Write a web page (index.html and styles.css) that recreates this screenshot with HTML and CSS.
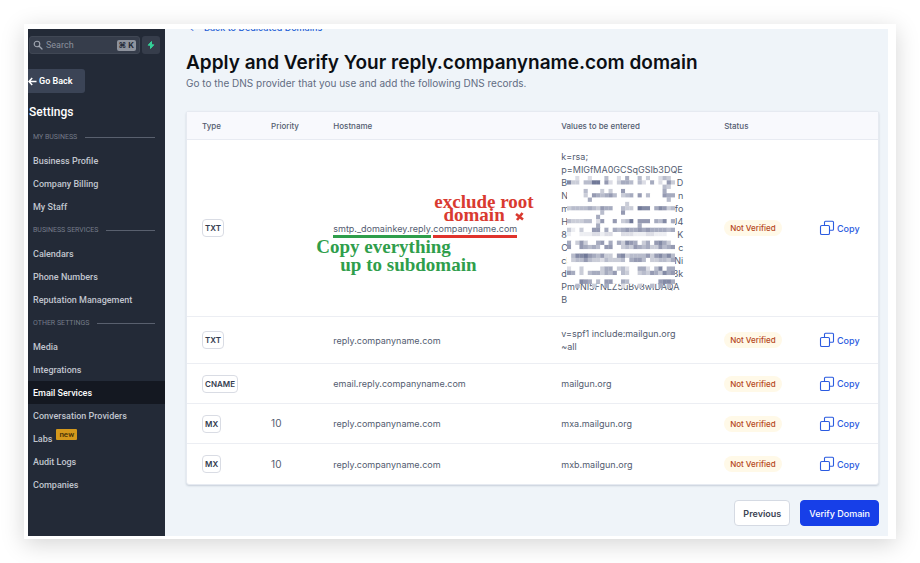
FILE: index.html
```html
<!DOCTYPE html>
<html lang="en">
<head>
  <meta charset="UTF-8" />
  <meta name="viewport" content="width=device-width, initial-scale=1.0"/>
  <title>Apply and Verify Your Domain</title>
  <link rel="stylesheet" href="styles.css">
</head>
<body>
  <svg width="0" height="0" class="sprite">
    <symbol id="copy" viewBox="0 0 16 16">
      <rect x="1.5" y="5.5" width="9" height="9" rx="1.3" fill="none" stroke="currentColor" stroke-width="1.1"/>
      <path d="M5.500 5.500V2.300q0-1 1-1H13.500q1 0 1 1V9.300q0 1-1 1H10.500" fill="none" stroke="currentColor" stroke-width="1.1"/>
    </symbol>
  </svg>

  <div class="frame">
    <aside class="sidebar">
      <div class="search-row">
        <div class="search">
          <svg width="10" height="10" viewBox="0 0 10 10"><circle cx="4" cy="4" r="2.800" fill="none" stroke="#a0a6b1" stroke-width="1.100"/><path d="M6.200 6.200L9 9" stroke="#a0a6b1" stroke-width="1.300" stroke-linecap="round"/></svg>
          <input type="text" placeholder="Search" aria-label="Search">
          <kbd>⌘ K</kbd>
        </div>
        <button class="bolt" aria-label="Quick actions">
          <svg width="8" height="10" viewBox="0 0 8 10"><path d="M4.500 1.500L1.200 5.200h2.300V8.500L6.800 4.800H4.500z" fill="#34d399" stroke="#34d399" stroke-linejoin="round"/></svg>
        </button>
      </div>
      <button class="go-back">
        <svg width="9" height="9" viewBox="0 0 9 9"><path d="M4.200 1L1 4.500L4.200 8M1 4.500H8.500" fill="none" stroke="#fff" stroke-width="1.500"/></svg>
        Go Back
      </button>
      <h2>Settings</h2>
      <nav>
        <h3>MY BUSINESS</h3>
        <a href="#">Business Profile</a>
        <a href="#">Company Billing</a>
        <a href="#">My Staff</a>
        <h3>BUSINESS SERVICES</h3>
        <a href="#">Calendars</a>
        <a href="#">Phone Numbers</a>
        <a href="#">Reputation Management</a>
        <h3>OTHER SETTINGS</h3>
        <a href="#">Media</a>
        <a href="#">Integrations</a>
        <a href="#" class="active">Email Services</a>
        <a href="#">Conversation Providers</a>
        <a href="#">Labs <span class="new">new</span></a>
        <a href="#">Audit Logs</a>
        <a href="#">Companies</a>
      </nav>
    </aside>

    <main>
      <a href="#" class="back-link"><span>←</span> Back to Dedicated Domains</a>
      <h1>Apply and Verify Your reply.companyname.com domain</h1>
      <p class="sub">Go to the DNS provider that you use and add the following DNS records.</p>

      <table>
        <colgroup>
          <col class="c-type"><col class="c-priority"><col class="c-host"><col class="c-value"><col class="c-status"><col>
        </colgroup>
        <thead>
          <tr><th>Type</th><th>Priority</th><th>Hostname</th><th>Values to be entered</th><th>Status</th><th></th></tr>
        </thead>
        <tbody>
          <tr>
            <td><span class="type">TXT</span></td>
            <td></td>
            <td>
              <div class="host">
                <span class="keep">smtp._domainkey.reply</span>.<span class="drop">companyname.com</span>
                <div class="note note-red">exclude root<br>domain
                  <svg width="9" height="9" viewBox="0 0 9 9"><path d="M1 2L8 7.500M7.500 1L2 8" stroke="#d93a30" stroke-width="2.600"/></svg>
                </div>
                <div class="note note-green">Copy everything<br><span>up to subdomain</span></div>
              </div>
            </td>
            <td>
              <div class="key">
                <div>k=rsa;</div>
                <div>p=MIGfMA0GCSqGSIb3DQE</div>
                <div class="split"><span>B</span><span>D</span></div>
                <div class="split"><span>N</span><span>n</span></div>
                <div class="split"><span>m</span><span>fo</span></div>
                <div class="split"><span>H</span><span>J4</span></div>
                <div class="split"><span>8</span><span>K</span></div>
                <div class="split"><span>C</span><span>c</span></div>
                <div class="split"><span>cl</span><span>Ni</span></div>
                <div class="split"><span>d</span><span>3k</span></div>
                <div>PmvNI5FNLZ5uBv8wIDAQA</div>
                <div>B</div>
                <svg id="mosaic" viewBox="0 0 26 26" preserveAspectRatio="none"></svg>
              </div>
            </td>
            <td><span class="status">Not Verified</span></td>
            <td><button class="copy"><svg><use href="#copy"/></svg>Copy</button></td>
          </tr>
          <tr>
            <td><span class="type">TXT</span></td>
            <td></td>
            <td>reply.companyname.com</td>
            <td>v=spf1 include:mailgun.org<br>~all</td>
            <td><span class="status">Not Verified</span></td>
            <td><button class="copy"><svg><use href="#copy"/></svg>Copy</button></td>
          </tr>
          <tr>
            <td><span class="type">CNAME</span></td>
            <td></td>
            <td>email.reply.companyname.com</td>
            <td>mailgun.org</td>
            <td><span class="status">Not Verified</span></td>
            <td><button class="copy"><svg><use href="#copy"/></svg>Copy</button></td>
          </tr>
          <tr>
            <td><span class="type">MX</span></td>
            <td class="num">10</td>
            <td>reply.companyname.com</td>
            <td>mxa.mailgun.org</td>
            <td><span class="status">Not Verified</span></td>
            <td><button class="copy"><svg><use href="#copy"/></svg>Copy</button></td>
          </tr>
          <tr>
            <td><span class="type">MX</span></td>
            <td class="num">10</td>
            <td>reply.companyname.com</td>
            <td>mxb.mailgun.org</td>
            <td><span class="status">Not Verified</span></td>
            <td><button class="copy"><svg><use href="#copy"/></svg>Copy</button></td>
          </tr>
        </tbody>
      </table>

      <div class="actions">
        <button class="btn">Previous</button>
        <button class="btn primary">Verify Domain</button>
      </div>
    </main>
  </div>
  <script src="script.js"></script>
</body>
</html>
```
FILE: styles.css
```css
* {
  box-sizing: border-box;
}
body {
  margin: 0;
  padding: 24px;
  background: #fff;
  font-family: Inter, sans-serif;
  font-size: 9px;
  color: #535c70;
}
button {
  font-family: inherit;
  cursor: pointer;
}
a {
  text-decoration: none;
}
.sprite {
  position: absolute;
}
.frame {
  display: flex;
  min-height: calc(100vh - 48px);
  padding: 5px 8px 3px 4px;
  background: #fff;
  box-shadow: 0 5px 22px rgba(0, 0, 0, 0.17);
}

/* sidebar */
.sidebar {
  width: 137px;
  flex-shrink: 0;
  background: #232a37;
  font-family: Roboto, sans-serif;
}
.search-row {
  display: flex;
  gap: 2px;
  margin-top: 7px;
  padding: 0 5px 0 1px;
}
.search {
  display: flex;
  align-items: center;
  flex: 1;
  gap: 3px;
  height: 18px;
  padding: 0 3px;
  background: #363d4b;
  border: 1px solid #404754;
  border-radius: 3px;
}
.search svg {
  flex-shrink: 0;
}
.search input {
  flex: 1;
  width: 20px;
  padding: 0;
  border: 0;
  background: none;
  font: 9px Roboto, sans-serif;
  color: #fff;
}
.search input::placeholder {
  color: #8b919d;
}
kbd {
  padding: 0 2px;
  border-radius: 2px;
  background: #8e939d;
  color: #232a37;
  font: bold 8px/11px Inter, "DejaVu Sans", sans-serif;
  white-space: nowrap;
}
.bolt {
  display: flex;
  align-items: center;
  justify-content: center;
  width: 18px;
  height: 18px;
  padding: 0;
  border: 0;
  border-radius: 3px;
  background: #363d4b;
}
.go-back {
  display: flex;
  align-items: center;
  gap: 2px;
  height: 24px;
  margin-top: 15px;
  padding: 0 13px 0 0;
  border: 0;
  border-radius: 0 3px 3px 0;
  background: #3b4456;
  color: #fff;
  font-size: 9px;
  font-weight: 600;
}
.sidebar h2 {
  margin: 11px 0 5px 1px;
  color: #fff;
  font-size: 12px;
  line-height: 16px;
  font-weight: 500;
}
.sidebar h3 {
  display: flex;
  align-items: center;
  gap: 8px;
  height: 24px;
  margin: 0;
  padding: 0 10px 0 5px;
  color: #747b88;
  font-size: 7px;
  font-weight: 400;
}
.sidebar h3::after {
  content: "";
  flex: 1;
  height: 1px;
  background: #59606e;
}
.sidebar nav a {
  display: flex;
  align-items: center;
  height: 23px;
  padding-left: 5px;
  color: #c0c5ce;
  font-size: 9px;
  font-weight: 500;
}
.sidebar nav a.active {
  background: #141821;
  color: #fff;
}
.new {
  margin: 0 0 8px 4px;
  padding: 0 3px;
  border-radius: 1px;
  background: #d3981c;
  color: #433006;
  font-size: 8px;
  line-height: 11px;
}

/* content */
main {
  flex: 1;
  min-width: 0;
  padding: 0 9px 10px 21px;
  overflow: hidden;
  background: #eff4f9;
}
.back-link {
  display: block;
  margin-top: -7px;
  padding-left: 3px;
  color: #1f5fd6;
  font-size: 9px;
  font-weight: 500;
  line-height: 12px;
}
.back-link span {
  margin-right: 4px;
}
h1 {
  margin: 17px 0 0;
  color: #0c0f14;
  font-size: 19px;
  line-height: 24px;
  font-weight: 600;
}
.sub {
  margin: 0 0 20px;
  color: #626c82;
  font-size: 10px;
  line-height: 16px;
}
table {
  width: 100%;
  table-layout: fixed;
  border-collapse: separate;
  border-spacing: 0;
  border: 1px solid #e6eaf1;
  border-radius: 3px;
  background: #fff;
  box-shadow: 0 1px 2px rgba(40, 60, 90, 0.2);
}
.c-type { width: 10%; }
.c-priority { width: 9%; }
.c-host { width: 33%; }
.c-value { width: 24%; }
.c-status { width: 13%; }
th {
  height: 28px;
  padding: 0 15px;
  background: #f8f9fd;
  border-bottom: 1px solid #e8ebf2;
  color: #535c70;
  font-size: 8px;
  font-weight: 500;
  text-align: left;
}
td {
  height: 40px;
  padding: 10px 15px;
  border-bottom: 1px solid #eceef3;
  line-height: 13px;
}
tr:last-child td {
  border-bottom: 0;
}
th:nth-child(5) {
  padding-left: 12px;
}
td:nth-child(5) {
  padding: 0 0 0 12px;
}
td:last-child {
  padding: 0 0 0 17px;
}
td:first-child {
  padding-top: 0;
  padding-bottom: 0;
}
.num {
  font-size: 10px;
}
.type {
  display: inline-block;
  padding: 0 2px;
  border: 1px solid #d9dce4;
  border-radius: 4px;
  color: #343d50;
  font-size: 8px;
  font-weight: 600;
  line-height: 16px;
}
.status {
  display: inline-block;
  padding: 0 6px;
  border-radius: 8px;
  background: #fff9e8;
  color: #b5471b;
  font-size: 8px;
  font-weight: 500;
  line-height: 16px;
}
.copy {
  display: flex;
  align-items: center;
  gap: 2px;
  padding: 0;
  border: 0;
  background: none;
  color: #2b5be0;
  font-size: 9px;
  font-weight: 500;
}
.copy svg {
  width: 16px;
  height: 16px;
}

/* hand-written notes on the first hostname */
.host {
  position: relative;
  white-space: nowrap;
}
.keep, .drop {
  display: inline-block;
  box-shadow: 0 3px 0 #2f9e4b;
}
.drop {
  box-shadow: 0 3px 0 #e0332c;
}
.note {
  position: absolute;
  font-family: "Liberation Serif", serif;
  font-weight: bold;
}
.note-red {
  left: 101px;
  bottom: 14px;
  color: #d93a30;
  font-size: 19px;
  line-height: 13px;
  text-align: center;
}
.note-red svg {
  margin-left: 6px;
}
.note-green {
  left: -17px;
  top: 16px;
  color: #2f9e4b;
  font-size: 19px;
  line-height: 18px;
}
.note-green span {
  margin-left: 24px;
}

.key {
  position: relative;
  width: 122px;
  white-space: nowrap;
}
.split {
  display: flex;
  justify-content: space-between;
}
#mosaic {
  position: absolute;
  left: 6px;
  top: 26px;
  width: 108px;
  height: 112px;
}

.actions {
  display: flex;
  justify-content: flex-end;
  gap: 10px;
  margin-top: 15px;
}
.btn {
  height: 26px;
  padding: 0 8px;
  border: 1px solid #d5dae3;
  border-radius: 4px;
  background: #fff;
  color: #3b4353;
  font-size: 9px;
  font-weight: 600;
}
.primary {
  border-color: #173fe8;
  background: #173fe8;
  color: #fff;
  font-weight: 500;
}
```
FILE: script.js
```js
// darkness of each block that hides the key, 0 = white, space = see-through
const rows = [
  '00200200040020500403002430',
  '73304488062035540420502063',
  '00000000000000000000000430',
  '00004000303006000000000500',
  '00003065456403450604000655',
  '00000500000000000000000040',
  '00000000000000300000000000',
  '34444543655004330877057634',
  '00000000400006000000000000',
  '00000005000000000000000000',
  '43334402600603480666054705',
  '00000005000000000500000000',
  '31030066050545655656555545',
  '10011122122002221112211100',
  '00000000000000000000000000',
  '50363005605053765035067530',
  '60065454066003436545336456',
  '00000000000000000000000000',
  '04778654633067344446367574',
  '03446433243334056640334435',
  '00000000000000000000000000',
  '20030000355034200552047055',
  '65030455354604300343653756',
  '00000000000000000000000000',
  '00076504066005400000006775',
  '  4   3  5   2   3  4 5 4 '
];

const mosaic = document.getElementById('mosaic');
let blocks = '';
rows.forEach((row, y) => {
  [...row].forEach((level, x) => {
    if (level === ' ') return;
    const l = 100 - level * 6;
    const color = level === '0' ? '#fff' : `hsl(228, 16%, ${l}%)`;
    blocks += `<rect x="${x}" y="${y}" width="1.05" height="1.05" fill="${color}"/>`;
  });
});
mosaic.innerHTML = blocks;
```
